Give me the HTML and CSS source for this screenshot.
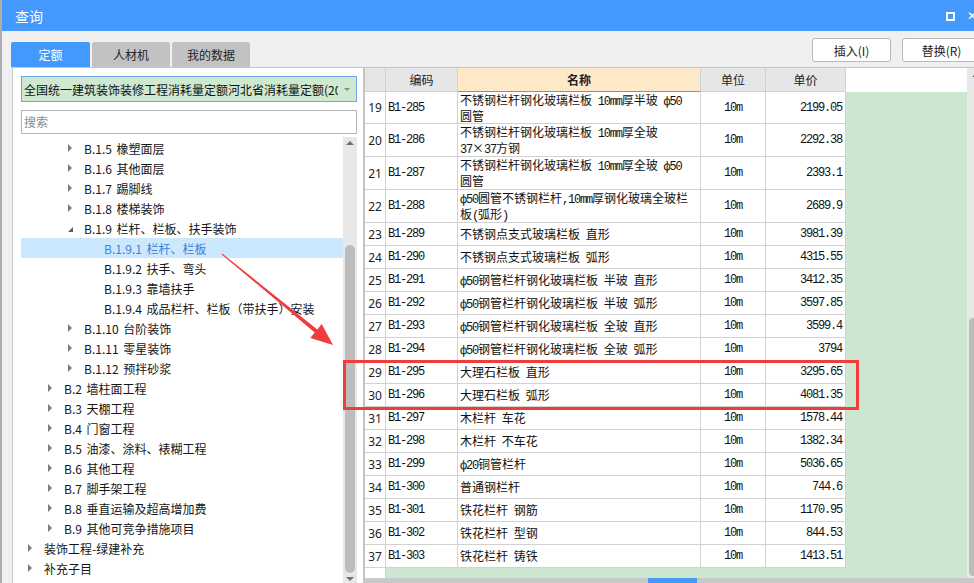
FILE: index.html
```html
<!DOCTYPE html>
<html lang="zh">
<head>
<meta charset="utf-8">
<title>查询</title>
<link rel="stylesheet" href="styles.css">
</head>
<body>
<div class="window">
  <div class="titlebar">
    <span class="title">查询</span>
    <span class="tb-icons"><span class="max"></span><span class="close">✕</span></span>
  </div>
  <div class="toolbar">
    <div class="tabs">
      <div class="tab active">定额</div>
      <div class="tab t2">人材机</div>
      <div class="tab t3">我的数据</div>
    </div>
    <div class="actions">
      <button class="btn">插入(I)</button>
      <button class="btn">替换(R)</button>
    </div>
  </div>
  <div class="main">
    <div class="left">
      <div class="select"><span class="select-text">全国统一建筑装饰装修工程消耗量定额河北省消耗量定额(2012)</span><span class="caret"></span></div>
      <div class="search">搜索</div>
      <div class="tree">
        <ul class="tree-list">
          <li class="l3"><span class="tw"><i class="tri"></i></span>B.1.5 橡塑面层</li>
          <li class="l3"><span class="tw"><i class="tri"></i></span>B.1.6 其他面层</li>
          <li class="l3"><span class="tw"><i class="tri"></i></span>B.1.7 踢脚线</li>
          <li class="l3"><span class="tw"><i class="tri"></i></span>B.1.8 楼梯装饰</li>
          <li class="l3"><span class="tw"><i class="tri-open"></i></span>B.1.9 栏杆、栏板、扶手装饰</li>
          <li class="l4 sel"><span class="tw"></span>B.1.9.1 栏杆、栏板</li>
          <li class="l4"><span class="tw"></span>B.1.9.2 扶手、弯头</li>
          <li class="l4"><span class="tw"></span>B.1.9.3 靠墙扶手</li>
          <li class="l4"><span class="tw"></span>B.1.9.4 成品栏杆、栏板（带扶手）安装</li>
          <li class="l3"><span class="tw"><i class="tri"></i></span>B.1.10 台阶装饰</li>
          <li class="l3"><span class="tw"><i class="tri"></i></span>B.1.11 零星装饰</li>
          <li class="l3"><span class="tw"><i class="tri"></i></span>B.1.12 预拌砂浆</li>
          <li class="l2"><span class="tw"><i class="tri"></i></span>B.2 墙柱面工程</li>
          <li class="l2"><span class="tw"><i class="tri"></i></span>B.3 天棚工程</li>
          <li class="l2"><span class="tw"><i class="tri"></i></span>B.4 门窗工程</li>
          <li class="l2"><span class="tw"><i class="tri"></i></span>B.5 油漆、涂料、裱糊工程</li>
          <li class="l2"><span class="tw"><i class="tri"></i></span>B.6 其他工程</li>
          <li class="l2"><span class="tw"><i class="tri"></i></span>B.7 脚手架工程</li>
          <li class="l2"><span class="tw"><i class="tri"></i></span>B.8 垂直运输及超高增加费</li>
          <li class="l2"><span class="tw"><i class="tri"></i></span>B.9 其他可竞争措施项目</li>
          <li class="l1"><span class="tw"><i class="tri"></i></span>装饰工程-绿建补充</li>
          <li class="l1"><span class="tw"><i class="tri"></i></span>补充子目</li>
        </ul>
        <div class="vscroll">
          <i class="arr-up"></i>
          <div class="thumb"></div>
          <i class="arr-down"></i>
        </div>
      </div>
    </div>
    <div class="right">
      <div class="grid-area">
        <div class="grid">
          <div class="row head">
            <div class="c rn"></div>
            <div class="c code">编码</div>
            <div class="c name">名称</div>
            <div class="c unit">单位</div>
            <div class="c price">单价</div>
            <div class="head-fill"></div>
          </div>
          <div class="row tall first">
            <div class="c rn">19</div><div class="c code m">B1-285</div>
            <div class="c name">不锈钢栏杆钢化玻璃栏板 <span class="m">10mm</span>厚半玻 <span class="m">ф50</span><br>圆管</div>
            <div class="c unit m">10m</div><div class="c price m">2199.05</div>
          </div>
          <div class="row tall">
            <div class="c rn">20</div><div class="c code m">B1-286</div>
            <div class="c name">不锈钢栏杆钢化玻璃栏板 <span class="m">10mm</span>厚全玻<br><span class="m">37</span>×<span class="m">37</span>方钢</div>
            <div class="c unit m">10m</div><div class="c price m">2292.38</div>
          </div>
          <div class="row tall">
            <div class="c rn">21</div><div class="c code m">B1-287</div>
            <div class="c name">不锈钢栏杆钢化玻璃栏板 <span class="m">10mm</span>厚全玻 <span class="m">ф50</span><br>圆管</div>
            <div class="c unit m">10m</div><div class="c price m">2393.1</div>
          </div>
          <div class="row tall">
            <div class="c rn">22</div><div class="c code m">B1-288</div>
            <div class="c name"><span class="m">ф50</span>圆管不锈钢栏杆<span class="m">,10mm</span>厚钢化玻璃全玻栏<br>板<span class="m">(</span>弧形<span class="m">)</span></div>
            <div class="c unit m">10m</div><div class="c price m">2689.9</div>
          </div>
          <div class="row">
            <div class="c rn">23</div><div class="c code m">B1-289</div>
            <div class="c name">不锈钢点支式玻璃栏板 直形</div>
            <div class="c unit m">10m</div><div class="c price m">3981.39</div>
          </div>
          <div class="row">
            <div class="c rn">24</div><div class="c code m">B1-290</div>
            <div class="c name">不锈钢点支式玻璃栏板 弧形</div>
            <div class="c unit m">10m</div><div class="c price m">4315.55</div>
          </div>
          <div class="row">
            <div class="c rn">25</div><div class="c code m">B1-291</div>
            <div class="c name"><span class="m">ф50</span>钢管栏杆钢化玻璃栏板 半玻 直形</div>
            <div class="c unit m">10m</div><div class="c price m">3412.35</div>
          </div>
          <div class="row">
            <div class="c rn">26</div><div class="c code m">B1-292</div>
            <div class="c name"><span class="m">ф50</span>钢管栏杆钢化玻璃栏板 半玻 弧形</div>
            <div class="c unit m">10m</div><div class="c price m">3597.85</div>
          </div>
          <div class="row">
            <div class="c rn">27</div><div class="c code m">B1-293</div>
            <div class="c name"><span class="m">ф50</span>钢管栏杆钢化玻璃栏板 全玻 直形</div>
            <div class="c unit m">10m</div><div class="c price m">3599.4</div>
          </div>
          <div class="row">
            <div class="c rn">28</div><div class="c code m">B1-294</div>
            <div class="c name"><span class="m">ф50</span>钢管栏杆钢化玻璃栏板 全玻 弧形</div>
            <div class="c unit m">10m</div><div class="c price m">3794</div>
          </div>
          <div class="row">
            <div class="c rn">29</div><div class="c code m">B1-295</div>
            <div class="c name">大理石栏板 直形</div>
            <div class="c unit m">10m</div><div class="c price m">3295.65</div>
          </div>
          <div class="row">
            <div class="c rn">30</div><div class="c code m">B1-296</div>
            <div class="c name">大理石栏板 弧形</div>
            <div class="c unit m">10m</div><div class="c price m">4081.35</div>
          </div>
          <div class="row">
            <div class="c rn">31</div><div class="c code m">B1-297</div>
            <div class="c name">木栏杆 车花</div>
            <div class="c unit m">10m</div><div class="c price m">1578.44</div>
          </div>
          <div class="row">
            <div class="c rn">32</div><div class="c code m">B1-298</div>
            <div class="c name">木栏杆 不车花</div>
            <div class="c unit m">10m</div><div class="c price m">1382.34</div>
          </div>
          <div class="row">
            <div class="c rn">33</div><div class="c code m">B1-299</div>
            <div class="c name"><span class="m">ф20</span>铜管栏杆</div>
            <div class="c unit m">10m</div><div class="c price m">5036.65</div>
          </div>
          <div class="row">
            <div class="c rn">34</div><div class="c code m">B1-300</div>
            <div class="c name">普通钢栏杆</div>
            <div class="c unit m">10m</div><div class="c price m">744.6</div>
          </div>
          <div class="row">
            <div class="c rn">35</div><div class="c code m">B1-301</div>
            <div class="c name">铁花栏杆 钢筋</div>
            <div class="c unit m">10m</div><div class="c price m">1170.95</div>
          </div>
          <div class="row">
            <div class="c rn">36</div><div class="c code m">B1-302</div>
            <div class="c name">铁花栏杆 型钢</div>
            <div class="c unit m">10m</div><div class="c price m">844.53</div>
          </div>
          <div class="row">
            <div class="c rn">37</div><div class="c code m">B1-303</div>
            <div class="c name">铁花栏杆 铸铁</div>
            <div class="c unit m">10m</div><div class="c price m">1413.51</div>
          </div>
          <div class="grid-fill"><div class="rn-fill"></div></div>
        </div>
        <div class="vscroll2">
          <i class="arr-up2"></i>
          <div class="thumb2"></div>
        </div>
      </div>
      <div class="hscroll"><div class="hthumb"></div></div>
    </div>
  </div>

  <div class="callout"></div>
  <svg class="arrow" width="120" height="100" viewBox="0 0 120 100">
    <polygon points="4.3,5.6 99.3,81.5 103.7,76 115,97 92.3,90 96.7,84.5 3.7,6.4" fill="#f03c3c"/>
  </svg>
</div>
</body>
</html>
```

FILE: styles.css
```css
* { box-sizing: border-box; margin: 0; padding: 0; }
html, body { width: 974px; height: 583px; overflow: hidden; }
body {
  background: #f0f0f0;
  font-family: "Noto Sans CJK SC", "Noto Sans", sans-serif;
  color: #141414;
}
.window {
  position: relative;
  width: 990px;
  height: 583px;
  border-left: 2px solid #adadad;
  background: #f0f0f0;
  display: flex;
  flex-direction: column;
  overflow: hidden;
}

/* title bar */
.titlebar {
  flex: none;
  height: 31px;
  background: #4499ff;
  color: #fff;
  display: flex;
  align-items: center;
  justify-content: space-between;
  padding: 0 13px 0 13px;
}
.title { font-size: 14px; line-height: 1; }
.tb-icons { display: flex; align-items: center; gap: 12px; }
.max { width: 9px; height: 9px; border: 2px solid #fff; margin-top: 1px; }
.close { font-size: 12px; line-height: 1; font-family: "DejaVu Sans", sans-serif; }

/* toolbar */
.toolbar {
  flex: none;
  height: 36px;
  display: flex;
  justify-content: space-between;
  padding: 0 9px 0 9px;
}
.tabs { display: flex; align-items: flex-end; gap: 2px; }
.tab {
  width: 79px;
  height: 25px;
  background: #c2c2c2;
  color: #222;
  font-size: 12px;
  line-height: 25px;
  text-align: center;
  border-radius: 2px 2px 0 0;
}
.tab.t2, .tab.t3 { width: 78px; }
.tab.active { background: #4499ff; color: #fff; }
.actions { display: flex; gap: 11px; padding-top: 7px; }
.btn {
  width: 79px;
  height: 24px;
  background: #fff;
  border: 1px solid #b9b9b9;
  border-radius: 3px;
  font-family: "Noto Sans CJK SC", "Noto Sans", sans-serif;
  font-size: 12px;
  color: #222;
}

/* main */
.main {
  flex: 1;
  display: flex;
  padding: 0 6px 0 10px;
  min-height: 0;
}
.left {
  flex: none;
  width: 351px;
  background: #fff;
  border-left: 1px solid #c6c6c6;
  border-top: 1px solid #c6c6c6;
  padding: 8px 6px 0 8px;
  display: flex;
  flex-direction: column;
  min-height: 0;
}
.select {
  flex: none;
  height: 26px;
  background: #cfe8cf;
  border: 1px solid #6ea6e8;
  display: flex;
  align-items: center;
  padding-left: 2px;
  font-size: 12px;
  white-space: nowrap;
}
.select-text { flex: 1; overflow: hidden; color: #111; }
.caret {
  flex: none;
  width: 18px;
  height: 100%;
  display: flex;
  align-items: center;
  justify-content: center;
}
.caret::before {
  content: "";
  border-top: 3px solid #8a8a8a;
  border-left: 3px solid transparent;
  border-right: 3px solid transparent;
}
.search {
  flex: none;
  height: 24px;
  margin-top: 8px;
  border: 1px solid #b4b4b4;
  color: #8c8c8c;
  font-size: 12px;
  line-height: 22px;
  padding-left: 2px;
}
.tree {
  flex: 1;
  display: flex;
  margin-top: 3px;
  min-height: 0;
  overflow: hidden;
}
.tree-list {
  flex: 1;
  list-style: none;
  padding-top: 1px;
}
.tree-list li {
  height: 20px;
  display: flex;
  align-items: center;
  font-size: 12px;
  white-space: pre;
  word-spacing: 2px;
  color: #161616;
}
.tree-list li.l1 { padding-left: 7px; }
.tree-list li.l2 { padding-left: 27px; }
.tree-list li.l3 { padding-left: 47px; }
.tree-list li.l4 { padding-left: 67px; }
.tree-list li.sel { background: #cce8ff; color: #3d80d6; }
.tw { flex: none; width: 16px; height: 20px; display: flex; align-items: center; }
.tri {
  display: block;
  border-left: 4px solid #7d7d7d;
  border-top: 4px solid transparent;
  border-bottom: 4px solid transparent;
}
.tri-open {
  display: block;
  margin-top: 3px;
  border-bottom: 5px solid #5e5e5e;
  border-left: 5px solid transparent;
}
.vscroll {
  flex: none;
  width: 14px;
  background: #e8e8e8;
  display: flex;
  flex-direction: column;
  align-items: center;
}
.arr-up {
  display: block;
  margin-top: 4px;
  border-bottom: 4px solid #707070;
  border-left: 4px solid transparent;
  border-right: 4px solid transparent;
}
.thumb {
  width: 10px;
  height: 328px;
  margin-top: 100px;
  background: #bdbdbd;
  border-radius: 5px;
}
.arr-down {
  display: block;
  margin-top: 4px;
  border-top: 4px solid #707070;
  border-left: 4px solid transparent;
  border-right: 4px solid transparent;
}

/* right grid */
.right {
  flex: 1;
  min-width: 0;
  border-left: 2px solid #c4c4c4;
  border-top: 1px solid #c4c4c4;
  display: flex;
  flex-direction: column;
  overflow: hidden;
}
.grid-area {
  flex: none;
  height: 510px;
  display: flex;
}
.grid {
  flex: 1;
  background: #cde6d0;
  display: flex;
  flex-direction: column;
}
.row { flex: none; display: flex; height: 23px; }
.row.tall { height: 33px; }
.row.tall.first { height: 32px; }
.c {
  flex: none;
  height: 100%;
  background: #fff;
  border-right: 1px solid #d2d2d2;
  border-bottom: 1px solid #d2d2d2;
  display: flex;
  align-items: center;
  font-size: 12px;
  color: #111;
  white-space: nowrap;
  overflow: hidden;
}
.c.rn { width: 21px; justify-content: center; font-family: "Noto Sans", sans-serif; color: #222; }
.c.code { width: 72px; padding-left: 2px; }
.c.name {
  width: 243px;
  padding-left: 2px;
  word-spacing: 3px;
  display: block;
  line-height: 22px;
}
.c.unit { width: 65px; justify-content: center; }
.c.price { width: 80px; justify-content: flex-end; padding-right: 3px; }
.row.tall .c.name { padding-top: 1px; line-height: 14px; }
.m {
  font-family: "Liberation Mono", monospace;
  letter-spacing: -1.2px;
  word-spacing: 0;
  font-size: 12px;
}

.row.head { height: 24px; }
.row.head .c {
  background: #e6e6e6;
  font-size: 12px;
  justify-content: center;
  color: #222;
  padding: 0;
}
.row.head .c.name {
  display: flex;
  line-height: normal;
  background: #fde8c9;
  font-weight: bold;
  border-bottom: 1px solid #5a9be6;
}
.head-fill { flex: 1; background: #fff; }
.grid-fill { flex: 1; display: flex; }
.rn-fill { width: 21px; background: #fff; border-right: 1px solid #d2d2d2; }

.vscroll2 {
  flex: none;
  width: 17px;
  background: #e8e8e8;
  display: flex;
  flex-direction: column;
  align-items: center;
}
.arr-up2 {
  display: block;
  margin-top: 5px;
  border-bottom: 4px solid #707070;
  border-left: 4px solid transparent;
  border-right: 4px solid transparent;
}
.thumb2 {
  width: 13px;
  height: 258px;
  margin-top: 241px;
  background: #bdbdbd;
  border-radius: 4px;
}
.hscroll {
  flex: none;
  height: 17px;
  background: #c9c9c9;
  padding-left: 283px;
}
.hthumb {
  width: 49px;
  height: 5px;
  background: #4499ff;
}

/* overlays */
.callout {
  position: absolute;
  left: 341px;
  top: 360px;
  width: 516px;
  height: 50px;
  border: 3px solid #f23b3b;
}
.arrow {
  position: absolute;
  left: 216px;
  top: 248px;
}
```
